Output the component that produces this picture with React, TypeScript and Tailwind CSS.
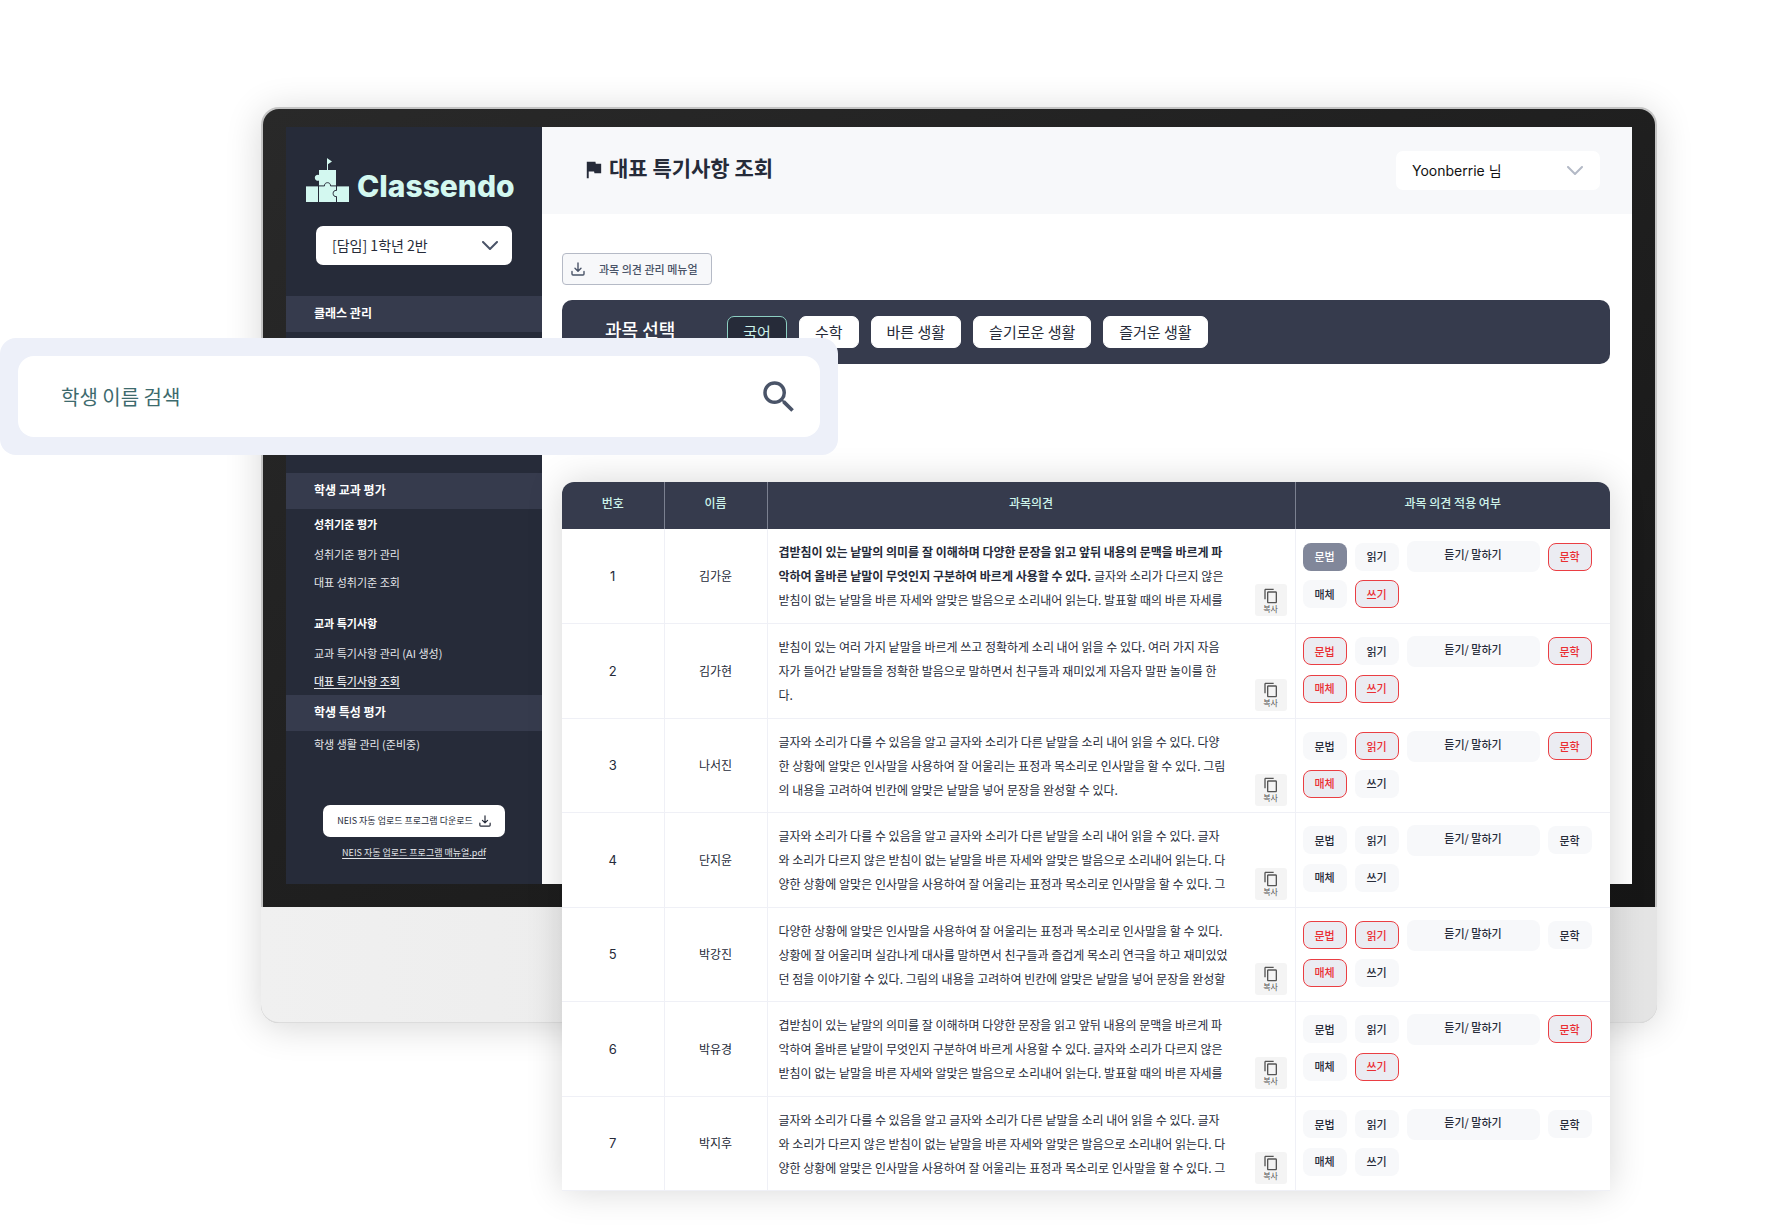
import { MdContentCopy, MdFlag, MdSearch } from "react-icons/md";

const sans = "font-['Noto_Sans_CJK_KR',sans-serif]";
const latin = "font-['Inter','Noto_Sans_CJK_KR',sans-serif]";

const subjects = ["국어", "수학", "바른 생활", "슬기로운 생활", "즐거운 생활"];
const skills = ["문법", "읽기", "듣기/ 말하기", "문학", "매체", "쓰기"];

type Row = { name: string; lines: { bold?: string; text?: string }[]; on: string[]; active?: string };

const rows: Row[] = [
  {
    name: "김가윤",
    lines: [
      { bold: "겹받침이 있는 낱말의 의미를 잘 이해하며 다양한 문장을 읽고 앞뒤 내용의 문맥을 바르게 파" },
      { bold: "악하여 올바른 낱말이 무엇인지 구분하여 바르게 사용할 수 있다.", text: " 글자와 소리가 다르지 않은" },
      { text: "받침이 없는 낱말을 바른 자세와 알맞은 발음으로 소리내어 읽는다. 발표할 때의 바른 자세를" },
    ],
    on: ["문학", "쓰기"],
    active: "문법",
  },
  {
    name: "김가현",
    lines: [
      { text: "받침이 있는 여러 가지 낱말을 바르게 쓰고 정확하게 소리 내어 읽을 수 있다. 여러 가지 자음" },
      { text: "자가 들어간 낱말들을 정확한 발음으로 말하면서 친구들과 재미있게 자음자 말판 놀이를 한" },
      { text: "다." },
    ],
    on: ["문법", "문학", "매체", "쓰기"],
  },
  {
    name: "나서진",
    lines: [
      { text: "글자와 소리가 다를 수 있음을 알고 글자와 소리가 다른 낱말을 소리 내어 읽을 수 있다. 다양" },
      { text: "한 상황에 알맞은 인사말을 사용하여 잘 어울리는 표정과 목소리로 인사말을 할 수 있다. 그림" },
      { text: "의 내용을 고려하여 빈칸에 알맞은 낱말을 넣어 문장을 완성할 수 있다." },
    ],
    on: ["읽기", "문학", "매체"],
  },
  {
    name: "단지윤",
    lines: [
      { text: "글자와 소리가 다를 수 있음을 알고 글자와 소리가 다른 낱말을 소리 내어 읽을 수 있다. 글자" },
      { text: "와 소리가 다르지 않은 받침이 없는 낱말을 바른 자세와 알맞은 발음으로 소리내어 읽는다. 다" },
      { text: "양한 상황에 알맞은 인사말을 사용하여 잘 어울리는 표정과 목소리로 인사말을 할 수 있다. 그" },
    ],
    on: [],
  },
  {
    name: "박강진",
    lines: [
      { text: "다양한 상황에 알맞은 인사말을 사용하여 잘 어울리는 표정과 목소리로 인사말을 할 수 있다." },
      { text: "상황에 잘 어울리며 실감나게 대사를 말하면서 친구들과 즐겁게 목소리 연극을 하고 재미있었" },
      { text: "던 점을 이야기할 수 있다. 그림의 내용을 고려하여 빈칸에 알맞은 낱말을 넣어 문장을 완성할" },
    ],
    on: ["문법", "읽기", "매체"],
  },
  {
    name: "박유경",
    lines: [
      { text: "겹받침이 있는 낱말의 의미를 잘 이해하며 다양한 문장을 읽고 앞뒤 내용의 문맥을 바르게 파" },
      { text: "악하여 올바른 낱말이 무엇인지 구분하여 바르게 사용할 수 있다. 글자와 소리가 다르지 않은" },
      { text: "받침이 없는 낱말을 바른 자세와 알맞은 발음으로 소리내어 읽는다. 발표할 때의 바른 자세를" },
    ],
    on: ["문학", "쓰기"],
  },
  {
    name: "박지후",
    lines: [
      { text: "글자와 소리가 다를 수 있음을 알고 글자와 소리가 다른 낱말을 소리 내어 읽을 수 있다. 글자" },
      { text: "와 소리가 다르지 않은 받침이 없는 낱말을 바른 자세와 알맞은 발음으로 소리내어 읽는다. 다" },
      { text: "양한 상황에 알맞은 인사말을 사용하여 잘 어울리는 표정과 목소리로 인사말을 할 수 있다. 그" },
    ],
    on: [],
  },
];

function Logo() {
  return (
    <div className="flex items-end gap-2">
      <svg width="43" height="44" viewBox="0 0 43 44" fill="none" aria-hidden="true">
        <path d="M21.5 0.5V12" stroke="#d3f8f0" strokeWidth="1" />
        <path d="M21.5 0.5L26 3.5L21.5 6.5Z" fill="#d3f8f0" />
        <path d="M13 12H30V28H13V22.5A3 3 0 1 1 13 17Z" fill="#d3f8f0" />
        <path d="M0 28H43V44H0Z" fill="#d3f8f0" />
        <path
          d="M0 27.9H18.5C18.2 23.6 24.8 23.6 24.5 27.9H43M12.5 27.9V44M30.5 27.9V32.5C26 31.5 26 39.5 30.5 38.5V44"
          stroke="#262b39"
          strokeWidth="1"
        />
      </svg>
      <span className="font-['Inter',sans-serif] text-[30px] leading-[32px] font-extrabold text-[#d3f8f0]">Classendo</span>
    </div>
  );
}

function Chevron({ className }: { className: string }) {
  return (
    <svg className={className} width="16" height="9" viewBox="0 0 16 9" fill="none" aria-hidden="true">
      <path d="M1 1L8 8L15 1" stroke="currentColor" strokeWidth="2" strokeLinecap="round" strokeLinejoin="round" />
    </svg>
  );
}

function DownloadIcon({ size }: { size: number }) {
  return (
    <svg width={size} height={size} viewBox="0 0 14 14" fill="none" stroke="currentColor" strokeWidth="1.4" strokeLinecap="round" strokeLinejoin="round" aria-hidden="true">
      <path d="M7 1V9M4 6.3L7 9.2L10 6.3M1 9.5V12A1 1 0 0 0 2 13H12A1 1 0 0 0 13 12V9.5" />
    </svg>
  );
}

function Sidebar() {
  const band = "flex h-9 items-center bg-[#363b4d] pb-[2px] pl-7 text-[12px] font-bold text-white";
  return (
    <aside className="flex w-64 shrink-0 flex-col bg-[#262b39] text-[#e4e6ea]">
      <div className="pt-[31px] pl-5">
        <Logo />
      </div>
      <div className="relative mt-6 mr-[30px] ml-[30px]">
        <select aria-label="학급 선택" className="h-[39px] w-full appearance-none rounded-[7px] bg-white pl-4 text-[14px] text-[#262b39]">
          <option>[담임] 1학년 2반</option>
        </select>
        <Chevron className="pointer-events-none absolute top-[15px] right-[14px] text-[#4a5468]" />
      </div>
      <nav className="mt-[31px] text-[11px]">
        <h2 className={band}>클래스 관리</h2>
        <div className="h-[141px]" />
        <h2 className={band}>학생 교과 평가</h2>
        <h3 className="mt-[3px] pl-7 leading-6 font-bold text-white">성취기준 평가</h3>
        <ul className="mt-1 pl-7 leading-7">
          <li><a href="#manage">성취기준 평가 관리</a></li>
          <li><a href="#standards">대표 성취기준 조회</a></li>
        </ul>
        <h3 className="mt-[15px] pl-7 leading-6 font-bold text-white">교과 특기사항</h3>
        <ul className="mt-1 pl-7 leading-7">
          <li><a href="#ai">교과 특기사항 관리 (AI 생성)</a></li>
          <li><a href="#notes" className="font-medium underline underline-offset-2">대표 특기사항 조회</a></li>
        </ul>
        <h2 className={band}>학생 특성 평가</h2>
        <a href="#life" className="block pl-7 leading-[26px]">학생 생활 관리 (준비중)</a>
      </nav>
      <div className="mt-12 flex flex-col items-center gap-2 pb-[23px] text-[9px]">
        <button className="flex h-8 w-[182px] items-center justify-center gap-[6px] rounded-[7px] bg-white text-[#262b39]">
          NEIS 자동 업로드 프로그램 다운로드
          <DownloadIcon size={12} />
        </button>
        <a href="#pdf" className="leading-4 underline underline-offset-2">NEIS 자동 업로드 프로그램 매뉴얼.pdf</a>
      </div>
    </aside>
  );
}

function Pill({ label, on, active }: { label: string; on: boolean; active: boolean }) {
  const wide = label.length > 2;
  const shape = wide ? "h-[31px] w-[133px] pb-1" : "h-7 w-11";
  const look = active
    ? "bg-[#81879a] text-white"
    : on
      ? "border border-[#ea3e43] bg-[#ebecf2] text-[#ea2e33]"
      : "bg-[#f7f8fa] text-[#262b39]";
  return (
    <button aria-pressed={on || active} className={`flex items-center justify-center rounded-lg text-[11px] font-medium ${shape} ${look}`}>
      {label}
    </button>
  );
}

function OpinionTable() {
  const head = "border-[#7b8090] pb-[6px] text-[12px] font-medium";
  return (
    <div className="mt-[118px] overflow-hidden rounded-t-[12px] bg-white shadow-[0_0_36px_rgba(0,0,0,0.16)]">
      <table className="w-full table-fixed border-collapse text-[12px] text-[#262b39]">
        <colgroup>
          <col className="w-[102px]" />
          <col className="w-[103px]" />
          <col />
          <col className="w-[315px]" />
        </colgroup>
        <thead>
          <tr className="h-[47px] bg-[#363b4d] text-[#cdf3ea]">
            <th className={head}>번호</th>
            <th className={`border-l ${head}`}>이름</th>
            <th className={`border-l ${head}`}>과목의견</th>
            <th className={`border-l ${head}`}>과목 의견 적용 여부</th>
          </tr>
        </thead>
        <tbody>
          {rows.map((row, i) => (
            <tr key={row.name} className="border-b border-[#eff0f6] odd:h-[94px] even:h-[95px]">
              <td className={`pt-[2px] text-center text-[13px] ${latin}`}>{i + 1}</td>
              <td className="border-l border-[#eff0f6] text-center">{row.name}</td>
              <td className="border-l border-[#eff0f6] p-0 align-top">
                <div className="flex items-end justify-between pt-[11px] pr-2 pl-[11px]">
                  <p className="leading-6 whitespace-nowrap">
                    {row.lines.map((line, n) => (
                      <span key={n} className="block">
                        {line.bold && <b className="font-bold">{line.bold}</b>}
                        {line.text}
                      </span>
                    ))}
                  </p>
                  <button className="-mb-1 flex h-8 w-8 shrink-0 flex-col items-center justify-center rounded-[3px] bg-[#f4f4f4] text-[8px] leading-[9px] text-[#555555]">
                    <MdContentCopy size={16} />
                    복사
                  </button>
                </div>
              </td>
              <td className="border-l border-[#eff0f6] p-0 align-top">
                <div className="flex flex-wrap items-center gap-2 pt-3 pl-[7px]">
                  {skills.map((s) => (
                    <Pill key={s} label={s} on={row.on.includes(s)} active={row.active === s} />
                  ))}
                </div>
              </td>
            </tr>
          ))}
        </tbody>
      </table>
    </div>
  );
}

function Main() {
  return (
    <main className="h-0 min-w-0 flex-1">
      <header className="flex h-[87px] items-center justify-between bg-[#f7f8fa] pr-8 pl-10">
        <h1 className="flex items-center gap-1 pb-[2px] text-[21px] leading-8 font-bold text-[#262b39]">
          <MdFlag size={23} />
          <span className="pb-[6px]">대표 특기사항 조회</span>
        </h1>
        <div className="relative">
          <select aria-label="사용자" className={`h-[39px] w-[204px] appearance-none rounded-[7px] bg-white pl-4 text-[14px] text-[#111111] ${latin}`}>
            <option>Yoonberrie 님</option>
          </select>
          <Chevron className="pointer-events-none absolute top-[15px] right-[17px] text-[#b3b9c6]" />
        </div>
      </header>
      <div className="pt-[39px] pr-[22px] pl-5">
        <button className="flex h-8 w-[150px] items-center gap-[14px] rounded-[4px] border border-[#b5bac6] bg-[#f7f8fa] pl-2 text-[11px] font-medium text-[#4a5468]">
          <DownloadIcon size={14} />
          과목 의견 관리 메뉴얼
        </button>
        <section className="mt-[15px] flex h-16 items-center gap-3 rounded-[10px] bg-[#363b4d] pl-[43px]">
          <h2 className="mr-10 pb-[6px] text-[18px] font-medium text-white">과목 선택</h2>
          {subjects.map((s, i) => (
            <button
              key={s}
              aria-pressed={i === 0}
              className={
                i === 0
                  ? "h-8 rounded-[7px] border border-[#8ccfc2] bg-[#262b39] px-[15px] text-[15px] text-[#cdf3ea]"
                  : "h-8 rounded-[7px] border border-white bg-white px-[15px] text-[15px] text-[#262b39]"
              }
            >
              {s}
            </button>
          ))}
        </section>
        <OpinionTable />
      </div>
    </main>
  );
}

export default function App() {
  return (
    <div className={`relative min-h-screen bg-white pt-[107px] pr-[111px] pb-[209px] pl-[261px] ${sans}`}>
      <div className="rounded-[18px] bg-[#c4c4c4] px-[2px] pt-[2px] shadow-[0_4px_36px_rgba(0,0,0,0.16)]">
        <div className="relative z-10 rounded-t-[16px] bg-linear-to-br from-[#292929] to-[#161616] px-[23px] pt-[18px] pb-[23px]">
          <div className="flex bg-white">
            <Sidebar />
            <Main />
          </div>
        </div>
        <div className="-mx-[2px] h-[116px] rounded-b-[18px] border-b border-[#dcdcdc] bg-linear-to-r from-[#f0f0f0] to-[#e4e4e4]" />
      </div>
      <form className="absolute top-[338px] left-0 z-20 w-[838px] rounded-[16px] bg-[#edf0f9] p-[18px]" onSubmit={(e) => e.preventDefault()}>
        <div className="flex h-[81px] items-center justify-between rounded-[16px] bg-white pr-5 pl-[43px]">
          <input
            aria-label="학생 이름 검색"
            placeholder="학생 이름 검색"
            className="min-w-0 flex-1 text-[20px] text-[#3d6a6d] outline-none placeholder:text-[#3d6a6d]"
          />
          <button aria-label="검색" className="text-[#4a5468]">
            <MdSearch size={42} />
          </button>
        </div>
      </form>
    </div>
  );
}
